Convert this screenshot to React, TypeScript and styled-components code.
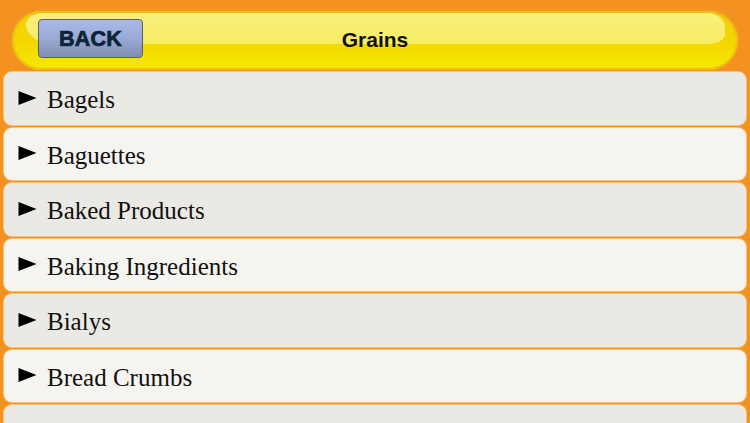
import React from "react";
import styled, { createGlobalStyle } from "styled-components";

const GlobalStyle = createGlobalStyle`
    html, body {
        margin: 0;
        padding: 0;
        background: #f39221;
        overflow: hidden;
    }
`;

const StyledPage = styled.div`
    width: 750px;
    height: 423px;
    background: #f39221;
    overflow: hidden;
    display: flex;
    flex-direction: column;
`;

const StyledHeaderWrap = styled.div`
    flex-shrink: 0;
    padding: 11px 12px 2px 12px;
`;

const StyledHeader = styled.div`
    position: relative;
    height: 59px;
    border-radius: 30px;
    background: linear-gradient(180deg, #f2cf0c 0%, #f3d600 50%, #f5e900 100%);
    box-shadow: inset 0 0 0 2px #efbd14, 0 0 0 1px #ee9d1c;
    display: flex;
    align-items: center;
    justify-content: center;
    overflow: hidden;
`;

const StyledGloss = styled.div`
    position: absolute;
    left: 14px;
    right: 13px;
    top: 2px;
    height: 31px;
    border-radius: 26px 26px 26px 44px / 18px 22px 14px 28px;
    background: linear-gradient(180deg, #f8f07c 0%, #f6ec64 100%);
`;

const StyledBackButton = styled.button`
    position: absolute;
    left: 26px;
    top: 8px;
    width: 105px;
    height: 39px;
    box-sizing: border-box;
    border: 1px solid #5a5f6a;
    border-radius: 4px;
    background: linear-gradient(180deg, #abb9e8 0%, #9aa9d6 50%, #7e8fae 100%);
    color: #0b2536;
    font-family: "Liberation Sans", Arial, sans-serif;
    font-weight: bold;
    font-size: 21.5px;
    -webkit-text-stroke: 0.7px #0b2536;
    letter-spacing: 0.2px;
    padding: 1px 0 0 0;
    cursor: pointer;
`;

const StyledTitle = styled.h1`
    position: relative;
    margin: -2px 0 0 0;
    font-family: "Liberation Sans", Arial, sans-serif;
    font-weight: bold;
    font-size: 21px;
    color: #111;
`;

const StyledList = styled.ul`
    list-style: none;
    margin: 0;
    padding: 0 4px;
    display: flex;
    flex-direction: column;
    gap: 3px;
`;

const StyledRow = styled.li<{ $alt: boolean }>`
    height: 52.5px;
    flex-shrink: 0;
    box-sizing: border-box;
    border-radius: 8px;
    background: ${(p) => (p.$alt ? "#f5f4ef" : "#ebe9e3")};
    box-shadow: 0 0 0 1px #f6c27e;
    display: flex;
    align-items: center;
    padding: 4px 0 0 14px;
`;

const StyledArrow = styled.svg`
    width: 19px;
    height: 14px;
    margin-right: 10px;
    margin-top: -5px;
`;

const StyledLabel = styled.span`
    font-family: "Liberation Serif", "Times New Roman", serif;
    font-size: 25px;
    color: #111;
`;

const items = [
    "Bagels",
    "Baguettes",
    "Baked Products",
    "Baking Ingredients",
    "Bialys",
    "Bread Crumbs",
    "",
];

const App: React.FC = () => {
    return (
        <StyledPage>
            <GlobalStyle />
            <StyledHeaderWrap>
                <StyledHeader>
                    <StyledGloss />
                    <StyledBackButton>BACK</StyledBackButton>
                    <StyledTitle>Grains</StyledTitle>
                </StyledHeader>
            </StyledHeaderWrap>
            <StyledList>
                {items.map((item, i) => (
                    <StyledRow key={i} $alt={i % 2 === 1}>
                        {item && (
                            <>
                                <StyledArrow viewBox="0 0 19 14">
                                    <polygon points="0.5,0 18.5,7 0.5,14" fill="#000" />
                                </StyledArrow>
                                <StyledLabel>{item}</StyledLabel>
                            </>
                        )}
                    </StyledRow>
                ))}
            </StyledList>
        </StyledPage>
    );
};

export default App;
